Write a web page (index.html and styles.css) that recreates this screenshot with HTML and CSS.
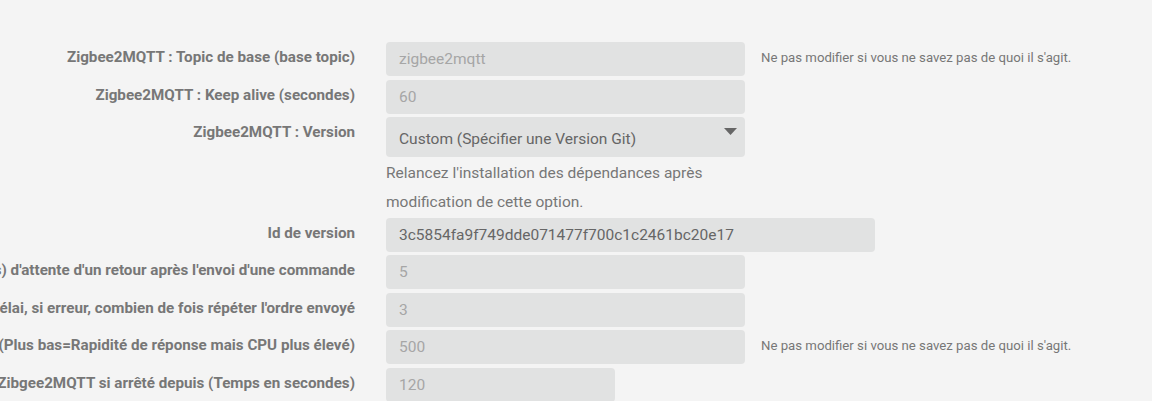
FILE: index.html
```html
<!DOCTYPE html>
<html lang="fr">
<head>
<meta charset="utf-8">
<link rel="stylesheet" href="styles.css">
</head>
<body>
<form class="form">
  <div class="row">
    <label class="label"><span>Zigbee2MQTT : Topic de base (base topic)</span></label>
    <div class="field"><input class="input w-md" placeholder="zigbee2mqtt"></div>
    <div class="help">Ne pas modifier si vous ne savez pas de quoi il s'agit.</div>
  </div>
  <div class="row">
    <label class="label"><span>Zigbee2MQTT : Keep alive (secondes)</span></label>
    <div class="field"><input class="input w-md" placeholder="60"></div>
  </div>
  <div class="row">
    <label class="label"><span>Zigbee2MQTT : Version</span></label>
    <div class="field">
      <div class="select w-md">
        <span>Custom (Spécifier une Version Git)</span>
        <svg class="caret" width="13" height="7" viewBox="0 0 13 7"><path d="M0 0H13L6.5 7Z" fill="#666"/></svg>
      </div>
      <p class="note">Relancez l'installation des dépendances après modification de cette option.</p>
    </div>
  </div>
  <div class="row">
    <label class="label"><span>Id de version</span></label>
    <div class="field"><input class="input w-lg filled" value="3c5854fa9f749dde071477f700c1c2461bc20e17"></div>
  </div>
  <div class="row">
    <label class="label"><span>Délai (en secondes) d'attente d'un retour après l'envoi d'une commande</span></label>
    <div class="field"><input class="input w-md" placeholder="5"></div>
  </div>
  <div class="row">
    <label class="label"><span>Passé ce délai, si erreur, combien de fois répéter l'ordre envoyé</span></label>
    <div class="field"><input class="input w-md" placeholder="3"></div>
  </div>
  <div class="row">
    <label class="label"><span>Cycle (ms) (Plus bas=Rapidité de réponse mais CPU plus élevé)</span></label>
    <div class="field"><input class="input w-md" placeholder="500"></div>
    <div class="help">Ne pas modifier si vous ne savez pas de quoi il s'agit.</div>
  </div>
  <div class="row">
    <label class="label"><span>Redémarrer Zibgee2MQTT si arrêté depuis (Temps en secondes)</span></label>
    <div class="field"><input class="input w-sm" placeholder="120"></div>
  </div>
</form>
</body>
</html>
```
FILE: styles.css
```css
html, body {
  margin: 0;
  padding: 0;
  background: #f4f4f4;
  font-family: Roboto, "Liberation Sans", sans-serif;
  overflow: hidden;
}
.form {
  padding-top: 42px;
}
.row {
  display: flex;
  align-items: flex-start;
  margin-bottom: 3.5px;
}
.label {
  width: 355px;
  flex-shrink: 0;
  display: flex;
  justify-content: flex-end;
  white-space: nowrap;
  font-size: 15.2px;
  font-weight: bold;
  color: #777;
  padding-top: 6px;
  line-height: 18px;
}
.field {
  margin-left: 31px;
}
.input {
  display: block;
  box-sizing: border-box;
  height: 34px;
  border: none;
  border-radius: 4px;
  background: #e1e2e2;
  padding: 0 13px;
  font-family: Roboto, "Liberation Sans", sans-serif;
  font-size: 15.5px;
  color: #666;
  outline: none;
}
.input::placeholder {
  color: #a6a6a6;
}
.w-md { width: 359px; }
.w-lg { width: 489px; }
.w-sm { width: 229px; }
.select {
  box-sizing: border-box;
  height: 40px;
  border-radius: 4px;
  background: #e1e2e2;
  padding: 3px 8px 0 13px;
  display: flex;
  align-items: center;
  justify-content: space-between;
  font-size: 15.5px;
  color: #666;
}
.caret {
  position: relative;
  top: -7px;
}
.note {
  margin: 2px 0 -3px;
  width: 359px;
  font-size: 15.5px;
  line-height: 29px;
  color: #777;
}
.help {
  margin-left: 16px;
  font-size: 13.2px;
  color: #777;
  line-height: 32px;
}
```
